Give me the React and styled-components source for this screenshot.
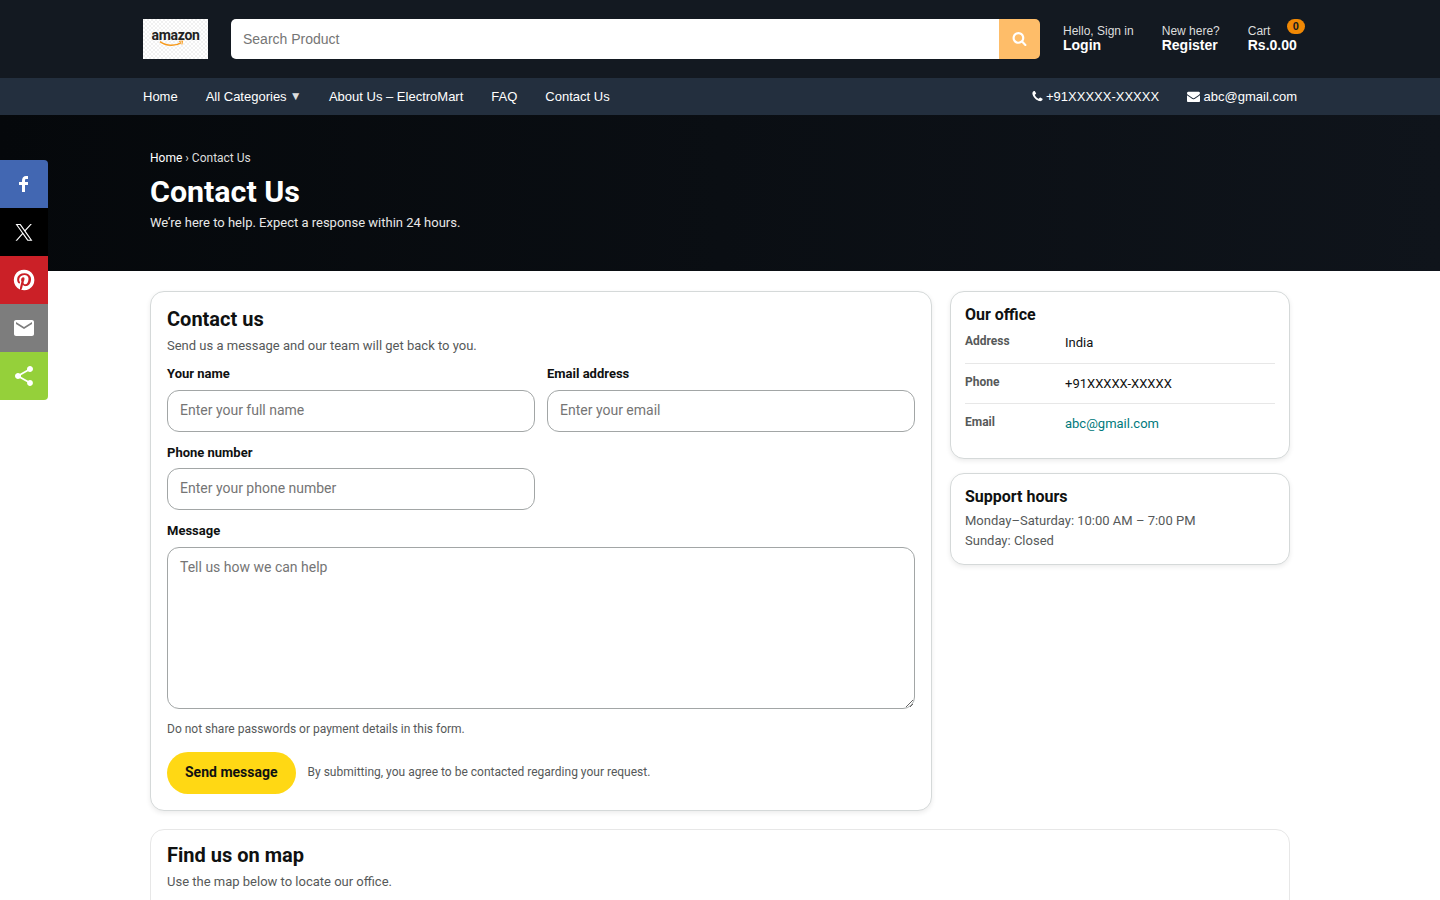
import React, { useState } from 'react';
import styled, { createGlobalStyle } from 'styled-components';


const GlobalStyle = createGlobalStyle`
 * {
    box-sizing: border-box;
 }

 body {
    margin: 0;
    background: #fff;
    color: #0f1111;
    font-family: Roboto, sans-serif;
    overflow: hidden;
 }

 #root {
    height: 900px;
    overflow: hidden;
 }

 a {
    color: inherit;
    text-decoration: none;
 }

 h1, h2, h3, p {
    margin: 0;
 }
`;

const Header = styled.header`
 height: 78px;
 background: #131921;
 font-family: "Liberation Sans", Arial, sans-serif;
`;

const HeaderInner = styled.div`
 width: 1154px;
 height: 100%;
 margin: 0 auto;
 display: flex;
 align-items: center;
`;

const Logo = styled.a`
 width: 65px;
 height: 40px;
 margin-right: 23px;
 display: flex;
 flex-direction: column;
 align-items: center;
 background: repeating-conic-gradient(#fff 0 25%, #f1f1f1 0 50%) 0 0 / 4px 4px;
`;

const LogoText = styled.span`
 margin-top: 7px;
 font: 700 14px/18px Roboto, sans-serif;
 letter-spacing: -.3px;
 color: #222;
`;

const Smile = styled.svg`
 width: 26px;
 height: 8px;
 margin: -4px 7px 0 0;
`;

const SearchForm = styled.form`
 width: 809px;
 height: 40px;
 display: flex;
 border-radius: 5px;
 overflow: hidden;
`;

const SearchInput = styled.input`
 flex: 1;
 border: 0;
 padding: 0 12px;
 font: 14px "Liberation Sans", Arial, sans-serif;
 background: #fff;

 &::placeholder {
    color: #757575;
 }
`;

const SearchButton = styled.button`
 width: 41px;
 border: 0;
 padding: 0 0 1px;
 display: flex;
 align-items: center;
 justify-content: center;
 color: #fff;
 background: #febd69;
`;

const Account = styled.div`
 display: flex;
 gap: 28px;
 margin-left: 23px;
 padding-bottom: 2px;
`;

const AccountLink = styled.a`
 position: relative;
 display: flex;
 flex-direction: column;
 font-size: 12px;
 line-height: 14px;
 color: #ddd;
 white-space: nowrap;

 strong {
    font-size: 14px;
    line-height: 15px;
    color: #fff;
 }
`;

const Badge = styled.span`
 position: absolute;
 top: -5px;
 right: -8px;
 width: 18px;
 height: 15px;
 border-radius: 10px;
 background: #f08804;
 color: #131921;
 font-size: 11px;
 font-weight: 700;
 line-height: 15px;
 text-align: center;
`;

const Nav = styled.nav`
 height: 37px;
 background: #232f3e;
 color: #fff;
 font: 13px "Liberation Sans", Arial, sans-serif;
`;

const NavInner = styled.div`
 width: 1154px;
 height: 100%;
 margin: 0 auto;
 display: flex;
 align-items: center;
 gap: 28px;
 white-space: nowrap;
`;

const NavLink = styled.a`
 display: flex;
 align-items: center;
 gap: ${props => props.$gap || 0}px;
 margin-left: ${props => props.$push ? 'auto' : 0};
`;

const Caret = styled.span`
 margin: 0 -.6px;
 font-size: 12px;
 line-height: 15px;
 color: #ddd;
`;

const Hero = styled.section`
 height: 156px;
 padding-top: 34px;
 background: linear-gradient(90deg, #05080b, #0f141b);
 color: #fff;
`;

const Container = styled.div`
 width: 1140px;
 margin: 0 auto;
`;

const Breadcrumb = styled.div`
 font-size: 12px;
 line-height: 18px;
 color: #ddd;

 a {
    color: #fff;
 }
`;

const HeroTitle = styled.h1`
 margin-top: 7px;
 font-size: 30.4px;
 line-height: 36px;
 font-weight: 700;
`;

const HeroText = styled.p`
 margin-top: 3px;
 font-size: 13px;
 line-height: 20px;
 color: #e8e8e8;
`;

const Columns = styled.div`
 display: grid;
 grid-template-columns: 782px 340px;
 gap: 18px;
 align-items: start;
 margin-top: 20px;
`;

const Side = styled.div`
 display: flex;
 flex-direction: column;
 gap: 14px;
`;

const Card = styled.section`
 height: ${props => props.$height}px;
 padding: ${props => props.$pad}px;
 border: 1px solid #d5d9d9;
 border-radius: 14px;
 background: #fff;
 box-shadow: 0 2px 5px rgba(15, 17, 17, .08);
`;

const MapCard = styled(Card)`
 margin-top: 18px;
 padding: 14px 16px;
 border-color: #e7e7e7;
 box-shadow: none;
`;

const Title = styled.h2`
 font-size: 20px;
 line-height: 23px;
 font-weight: 700;
`;

const SubTitle = styled.p`
 margin-top: 6px;
 font-size: 13px;
 line-height: 18px;
 color: #565959;
`;

const FormGrid = styled.form`
 display: grid;
 grid-template-columns: 1fr 1fr;
 column-gap: 12px;
 row-gap: 12.25px;
 margin-top: 10.45px;
`;

const Field = styled.label`
 grid-column: ${props => props.$wide ? '1 / -1' : '1'};
 display: flex;
 flex-direction: column;
 gap: 6px;
 font-size: 13px;
 line-height: 18.2px;
 font-weight: 700;

 &:nth-child(2) {
    grid-column: 2;
 }
`;

const Input = styled.input`
 width: 100%;
 height: 42px;
 padding: 0 12px 2px;
 border: 1px solid #a2a6a6;
 border-radius: 12px;
 font: 14px Roboto, sans-serif;
 outline: 0;

 &::placeholder {
    color: #757575;
 }
`;

const TextArea = styled(Input)`
 display: block;
 height: 162px;
 padding: 10px 12px;
 line-height: 18px;
 resize: vertical;
`;

const Note = styled.p`
 font-size: 12px;
 line-height: 17px;
 color: #565959;
`;

const Warning = styled(Note)`
 margin-top: 12px;
`;

const Actions = styled.div`
 display: flex;
 align-items: center;
 gap: 12px;
 margin-top: 14px;
`;

const SendButton = styled.button`
 height: 42px;
 padding: 0 18px 2px;
 border: 0;
 border-radius: 21px;
 background: #ffd814;
 color: #0f1111;
 font: 700 14px Roboto, sans-serif;
`;

const SideTitle = styled.h3`
 font-size: 16px;
 line-height: 17.2px;
 font-weight: 700;
`;

const InfoRow = styled.div`
 display: grid;
 grid-template-columns: 100px 1fr;
 padding: 10px 0;
 border-bottom: 1px solid #e7e7e7;
 font-size: 13px;
 line-height: 19.5px;

 strong {
    font-size: 12px;
    line-height: 16px;
    color: #565959;
 }

 a {
    color: #007a7c;
 }

 &:last-child {
    border-bottom: 0;
 }
`;

const Hours = styled.p`
 margin-top: 5.8px;
 font-size: 13px;
 line-height: 20px;
 color: #565959;
`;

const ShareBar = styled.div`
 position: fixed;
 left: 0;
 top: 160px;
 width: 48px;
 border-radius: 0 4px 4px 0;
 overflow: hidden;
`;

const ShareButton = styled.a`
 height: 48px;
 display: flex;
 align-items: center;
 justify-content: center;
 background: ${props => props.$color};
`;


const icons = {
    search: 'M1216 832q0-185-131.5-316.5t-316.5-131.5-316.5 131.5-131.5 316.5 131.5 316.5 316.5 131.5 316.5-131.5 131.5-316.5zm512 832q0 52-38 90t-90 38q-54 0-90-38l-343-342q-179 124-399 124-143 0-273.5-55.5t-225-150-150-225-55.5-273.5 55.5-273.5 150-225 225-150 273.5-55.5 273.5 55.5 225 150 150 225 55.5 273.5q0 220-124 399l343 343q37 37 37 90z',
    phone: 'M1600 1240q0 27-10 70.5t-21 68.5q-21 50-122 106-94 51-186 51-27 0-53-3.5t-57.5-12.5-47-14.5-55.5-20.5-49-18q-98-35-175-83-127-79-264-216t-216-264q-48-77-83-175-3-9-18-49t-20.5-55.5-14.5-47-12.5-57.5-3.5-53q0-92 51-186 56-101 106-122 25-11 68.5-21t70.5-10q14 0 21 3 18 6 53 76 11 19 30 54t35 63.5 31 53.5q3 4 17.5 25t21.5 35.5 7 28.5q0 20-28.5 50t-62 55-62 53-28.5 46q0 9 5 22.5t8.5 20.5 14 24 11.5 19q76 137 174 235t235 174q2 1 19 11.5t24 14 20.5 8.5 22.5 5q18 0 46-28.5t53-62 55-62 50-28.5q14 0 28.5 7t35.5 21.5 25 17.5q25 15 53.5 31t63.5 35 54 30q70 35 76 53 3 7 3 21z',
    envelope: 'M1792 710v794q0 66-47 113t-113 47h-1472q-66 0-113-47t-47-113v-794q44 49 101 87 362 246 497 345 57 42 92.5 65.5t94.5 48 110 24.5h2q51 0 110-24.5t94.5-48 92.5-65.5q170-123 498-345 57-39 100-87zm0-294q0 79-49 151t-122 123q-376 261-468 325-10 7-42.5 31t-54 38.5-52 32.5-57.5 27-50 9h-2q-23 0-50-9t-57.5-27-52-32.5-54-38.5-42.5-31q-91-64-262-182.5t-205-142.5q-62-42-117-115.5t-55-136.5q0-78 41.5-130t118.5-52h1472q65 0 112.5 47t47.5 113z',
};

const shares = [
    { name: 'Facebook', color: '#4267b2', box: '0 0 40 40', path: 'm21.7 16.7h5v5h-5v11.6h-5v-11.6h-5v-5h5v-2.1c0-2 0.6-4.5 1.8-5.9 1.3-1.3 2.8-2 4.7-2h3.5v5h-3.5c-0.9 0-1.5 0.6-1.5 1.5v3.5z' },
    { name: 'X', color: '#000', box: '-5 -5.5 34 34', path: 'M14.258 10.152L23.176 0h-2.113l-7.747 8.813L7.133 0H0l9.352 13.328L0 23.973h2.113l8.176-9.309 6.531 9.309h7.133zm-2.895 3.293l-.949-1.328L2.875 1.56h3.246l6.086 8.523.945 1.328 7.91 11.078h-3.246z' },
    { name: 'Pinterest', color: '#cb2027', box: '0 0 40 40', path: 'm37.3 20q0 4.7-2.3 8.6t-6.3 6.2-8.6 2.3q-2.4 0-4.8-0.7 1.3-2 1.7-3.6 0.2-0.8 1.2-4.7 0.5 0.8 1.7 1.5t2.5 0.6q2.7 0 4.8-1.5t3.3-4.2 1.2-6.1q0-2.5-1.4-4.7t-3.8-3.7-5.7-1.4q-2.4 0-4.4 0.7t-3.4 1.7-2.5 2.4-1.5 2.9-0.4 3q0 2.4 0.8 4.1t2.7 2.5q0.6 0.3 0.8-0.5 0.1-0.1 0.2-0.6t0.2-0.7q0.1-0.5-0.3-1-1.1-1.3-1.1-3.3 0-3.4 2.3-5.8t6.1-2.5q3.4 0 5.3 1.9t1.9 4.7q0 3.8-1.6 6.5t-3.9 2.6q-1.3 0-2.2-0.9t-0.5-2.4q0.2-0.8 0.6-2.1t0.7-2.3 0.2-1.6q0-1.2-0.6-1.9t-1.7-0.7q-1.4 0-2.3 1.2t-1 3.2q0 1.6 0.6 2.7l-2.2 9.4q-0.4 1.5-0.3 3.9-4.6-2-7.5-6.3t-2.8-9.4q0-4.7 2.3-8.6t6.2-6.2 8.6-2.3 8.6 2.3 6.3 6.2 2.3 8.6z' },
    { name: 'Email', color: '#7d7d7d', box: '0 0 24 24', path: 'M20 4H4c-1.1 0-2 .9-2 2v12c0 1.1.9 2 2 2h16c1.1 0 2-.9 2-2V6c0-1.1-.9-2-2-2zm0 4l-8 5-8-5V6l8 5 8-5v2z' },
    { name: 'Share', color: '#95d03a', box: '0 0 24 24', path: 'M18 16.08c-.76 0-1.44.3-1.96.77L8.91 12.7c.05-.23.09-.46.09-.7s-.04-.47-.09-.7l7.05-4.11c.54.5 1.25.81 2.04.81 1.66 0 3-1.34 3-3s-1.34-3-3-3-3 1.34-3 3c0 .24.04.47.09.7L8.04 9.81C7.5 9.31 6.79 9 6 9c-1.66 0-3 1.34-3 3s1.34 3 3 3c.79 0 1.5-.31 2.04-.81l7.12 4.16c-.05.21-.08.43-.08.65 0 1.61 1.31 2.92 2.92 2.92s2.92-1.31 2.92-2.92-1.31-2.92-2.92-2.92z' },
];

const Icon = ({ path, size, box = '0 0 1792 1792' }) => (
    <svg width={size} height={size} viewBox={box} fill="currentColor">
        <path d={path} />
    </svg>
);


const TopBar = () => (
    <Header>
        <HeaderInner>
            <Logo href="#">
                <LogoText>amazon</LogoText>
                <Smile viewBox="0 0 28 8">
                    <path d="M1 1.5C8 6.5 18 6.5 24 2.5" fill="none" stroke="#f79a1c" strokeWidth="1.6" />
                    <path d="M21.5 1.3l4-.6-.8 4" fill="none" stroke="#f79a1c" strokeWidth="1" />
                </Smile>
            </Logo>
            <SearchForm>
                <SearchInput placeholder="Search Product" />
                <SearchButton type="button">
                    <Icon path={icons.search} size={15} />
                </SearchButton>
            </SearchForm>
            <Account>
                <AccountLink href="#">Hello, Sign in<strong>Login</strong></AccountLink>
                <AccountLink href="#">New here?<strong>Register</strong></AccountLink>
                <AccountLink href="#">Cart<strong>Rs.0.00</strong><Badge>0</Badge></AccountLink>
            </Account>
        </HeaderInner>
    </Header>
);

const MainNav = () => (
    <Nav>
        <NavInner>
            <NavLink href="#">Home</NavLink>
            <NavLink href="#" $gap={3.6}>All Categories <Caret>▼</Caret></NavLink>
            <NavLink href="#">About Us – ElectroMart</NavLink>
            <NavLink href="#">FAQ</NavLink>
            <NavLink href="#">Contact Us</NavLink>
            <NavLink href="#" $push $gap={2.5}>
                <Icon path={icons.phone} size={13} />
                +91XXXXX-XXXXX
            </NavLink>
            <NavLink href="#" $gap={3.5}>
                <Icon path={icons.envelope} size={13} />
                abc@gmail.com
            </NavLink>
        </NavInner>
    </Nav>
);

const ContactForm = () => {

    const [message, setMessage] = useState('');

    return (
        <Card $height={520} $pad={16}>
            <Title>Contact us</Title>
            <SubTitle>Send us a message and our team will get back to you.</SubTitle>
            <FormGrid>
                <Field>Your name<Input placeholder="Enter your full name" /></Field>
                <Field>Email address<Input placeholder="Enter your email" /></Field>
                <Field>Phone number<Input placeholder="Enter your phone number" /></Field>
                <Field $wide>
                    Message
                    <TextArea
                        as="textarea"
                        placeholder="Tell us how we can help"
                        value={message}
                        onChange={e => setMessage(e.target.value)}
                    />
                </Field>
            </FormGrid>
            <Warning>Do not share passwords or payment details in this form.</Warning>
            <Actions>
                <SendButton type="button">Send message</SendButton>
                <Note>By submitting, you agree to be contacted regarding your request.</Note>
            </Actions>
        </Card>
    );
};

const App = () => {
  return (
    <>
        <GlobalStyle />
        <TopBar />
        <MainNav />
        <Hero>
            <Container>
                <Breadcrumb><a href="#">Home</a> › Contact Us</Breadcrumb>
                <HeroTitle>Contact Us</HeroTitle>
                <HeroText>We’re here to help. Expect a response within 24 hours.</HeroText>
            </Container>
        </Hero>
        <Container>
            <Columns>
                <ContactForm />
                <Side>
                    <Card $height={168} $pad={14}>
                        <SideTitle>Our office</SideTitle>
                        <InfoRow><strong>Address</strong><span>India</span></InfoRow>
                        <InfoRow><strong>Phone</strong><span>+91XXXXX-XXXXX</span></InfoRow>
                        <InfoRow><strong>Email</strong><a href="#">abc@gmail.com</a></InfoRow>
                    </Card>
                    <Card $height={92} $pad={14}>
                        <SideTitle>Support hours</SideTitle>
                        <Hours>Monday–Saturday: 10:00 AM – 7:00 PM<br />Sunday: Closed</Hours>
                    </Card>
                </Side>
            </Columns>
            <MapCard $height={480}>
                <Title>Find us on map</Title>
                <SubTitle>Use the map below to locate our office.</SubTitle>
            </MapCard>
        </Container>
        <ShareBar>
            {shares.map(share => (
                <ShareButton key={share.name} href="#" aria-label={share.name} $color={share.color}>
                    <svg width="24" height="24" viewBox={share.box} fill="#fff">
                        <path d={share.path} />
                    </svg>
                </ShareButton>
            ))}
        </ShareBar>
    </>
  )
}

export default App
